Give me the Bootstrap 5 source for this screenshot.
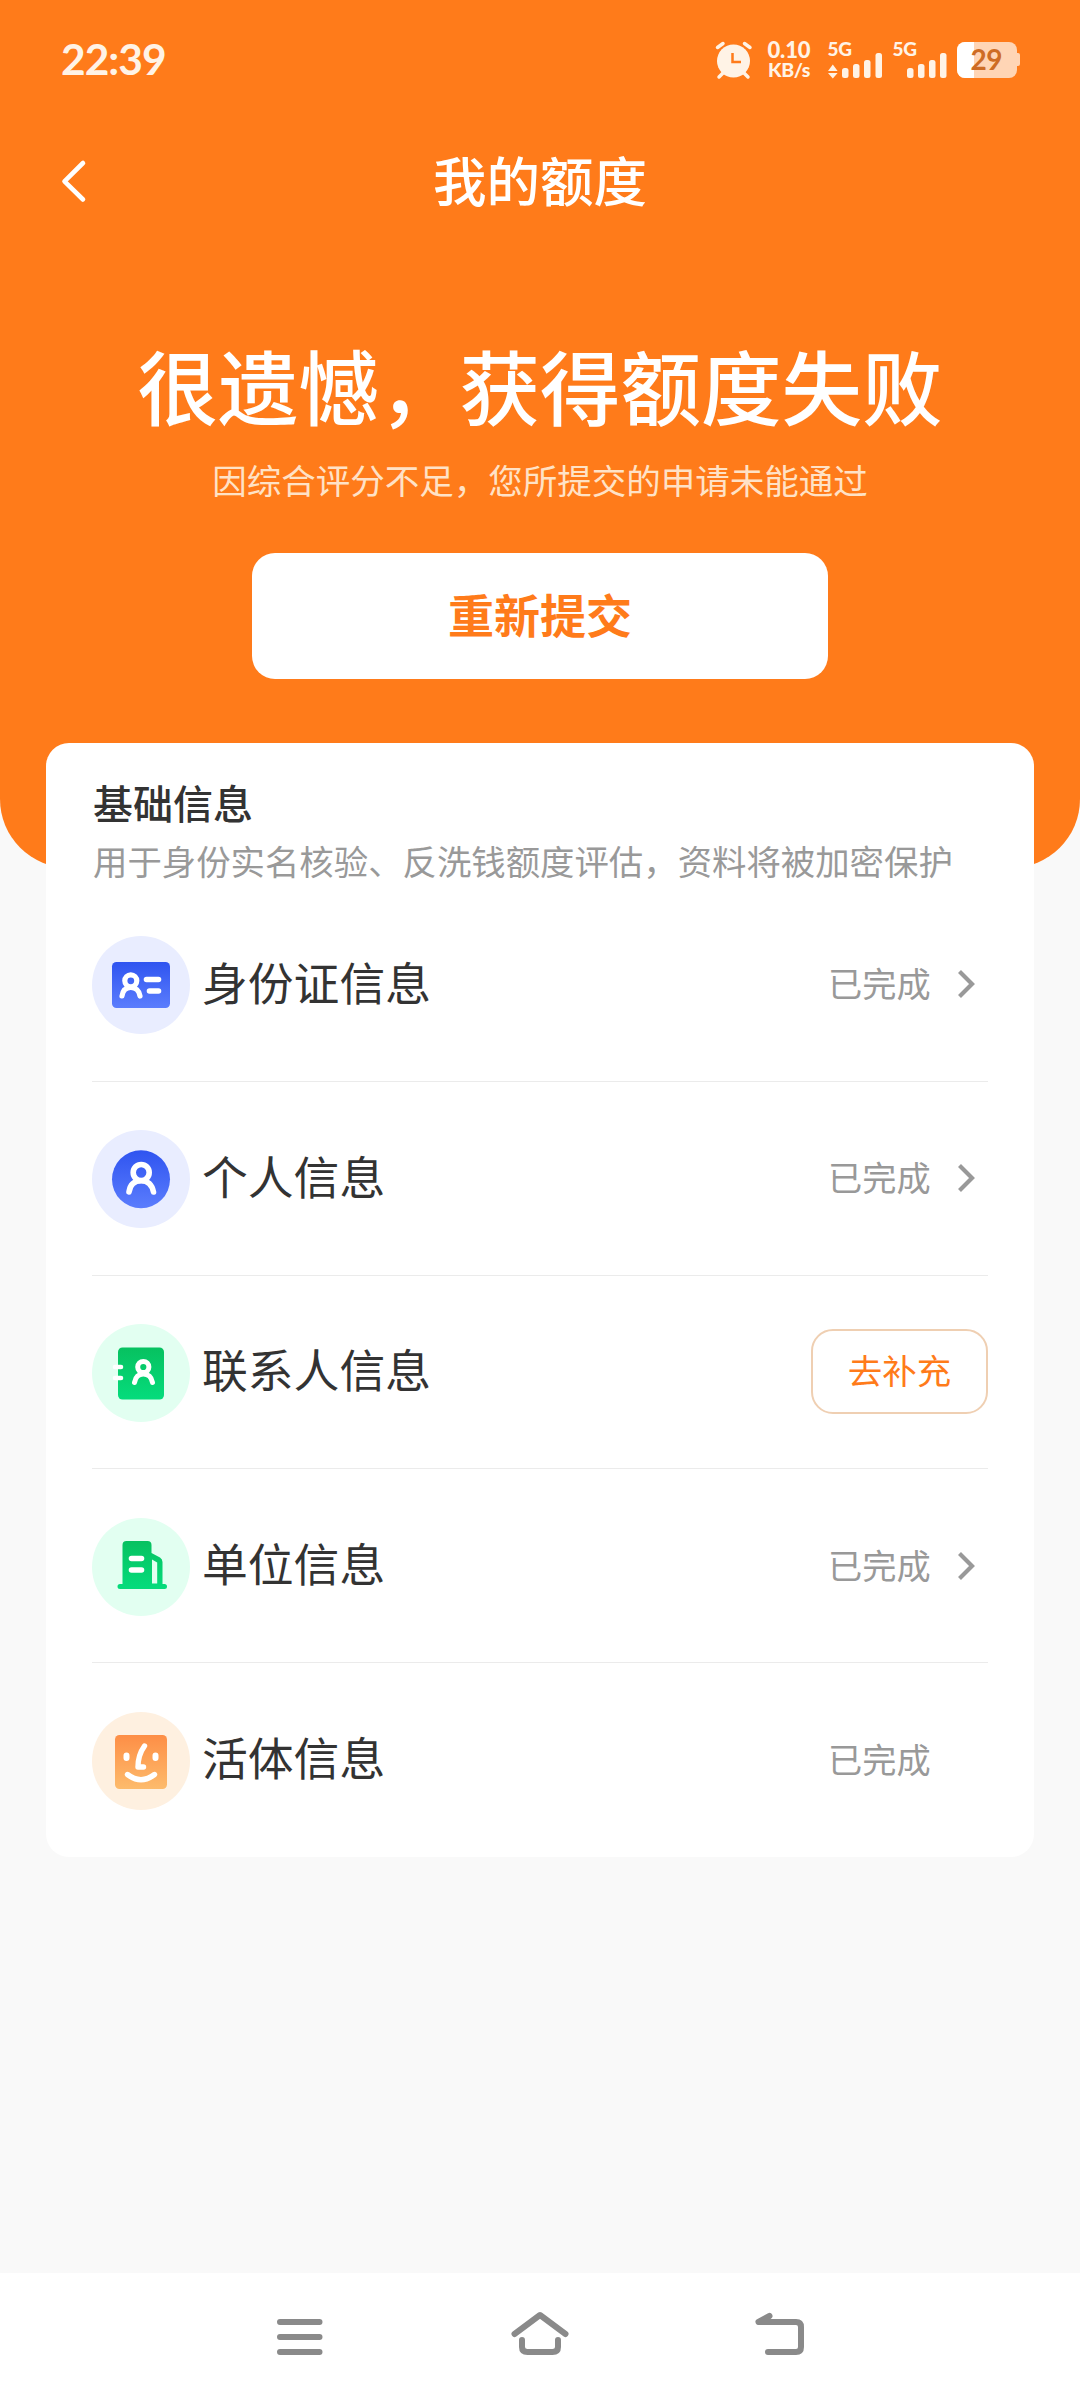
<!DOCTYPE html>
<html lang="zh-CN">
<head>
<meta charset="utf-8">
<meta name="viewport" content="width=device-width, initial-scale=1">
<title>我的额度</title>
<link href="https://cdn.jsdelivr.net/npm/bootstrap@5.3.0/dist/css/bootstrap.min.css" rel="stylesheet">
<style>
body{font-family:"Noto Sans CJK SC","Noto Sans",sans-serif;background:#f9f9f9;color:#333;min-height:2400px;line-height:1}
svg{display:block;flex:none}
.hero{background:#ff7b1a;height:868px;border-radius:0 0 69px 69px;color:#fff}
.statusbar{height:120px;padding:0 60px 0 61px}
.clock{font:700 42.500px/1 Lato,sans-serif;color:#fff3e6;letter-spacing:-1px;margin-top:-2px}
.titlebar{height:122px;padding:0 60px}
.titlebar h1{font-size:53.5px;font-weight:500;line-height:60px;position:relative;padding-bottom:4px}
.side{width:30px}
.headline{font-size:80.5px;font-weight:500;line-height:100px;margin-top:92px}
.reason{font-size:34.5px;line-height:44px;color:#ffe2c6;margin-top:23px;font-weight:400}
.resubmit{width:576px;height:126px;border-radius:23px;background:#fff;color:#ff7b1a;font-size:46px;font-weight:700;margin-top:52px;padding:0 0 6px}
.info{width:988px;height:1114px;margin-top:-125px;border:0;border-radius:23px;padding:0 46px}
.info h2{font-size:40px;font-weight:500;line-height:50px;margin:34px 0 0 1px}
.hint{font-size:34.4px;line-height:42px;color:#999;margin:12px 0 0 1px;white-space:nowrap}
.rows{margin-top:7px}
.rows .list-group-item{height:193.8px;padding:0;border-color:#ebebeb;background:transparent;color:#333}
.rows .list-group-item:last-child{height:193px}
.pic{margin-top:2px}
.name{font-size:45.8px;line-height:60px;margin:-7px 0 0 12px}
.done{font-size:34.2px;line-height:44px;color:#999;margin-top:-4px;width:160px}
.arrow{margin-left:-30px;margin-right:13px}
.fill{width:177px;height:85px;border:2px solid #efcfb2;border-radius:22px;color:#ff7b1a;font-size:34.5px;padding:0 0 5px}
.sysnav{height:127px;background:#fff;position:fixed;left:0;right:0;bottom:0}
</style>
</head>
<body>
<header class="hero d-flex flex-column">
  <div class="statusbar d-flex justify-content-between align-items-center">
    <span class="clock">22:39</span>
    <svg width="306" height="80" viewBox="714 20 306 80" fill="#fff3e6" font-family="Lato,sans-serif" font-weight="900">
      <circle cx="733.500" cy="61" r="16.500"/>
      <path d="M717.500 47.500L723 43.500M744.500 43.500L750 47.500M719 77L724 72M748 77L743 72" fill="none" stroke="#fff3e6" stroke-width="3.500" stroke-linecap="round"/>
      <path d="M732.500 53V62H741" fill="none" stroke="#ff7b1a" stroke-width="2.500"/>
      <text x="767.500" y="57.500" font-size="22" textLength="43">0.10</text>
      <text x="768" y="77" font-size="19.500" textLength="42.500">KB/s</text>
      <text x="827.500" y="56" font-size="19" textLength="24.500">5G</text>
      <path d="M828 71L832.800 64.500L837.600 71ZM828 73L837.600 73L832.800 78.500Z"/>
      <rect x="842" y="68" width="6.500" height="10" rx="2.500"/><rect x="853" y="64" width="6.500" height="14" rx="2.500"/><rect x="864" y="60" width="6.500" height="18" rx="2.500"/><rect x="875.500" y="53" width="6.500" height="25" rx="2.500"/>
      <text x="892.500" y="56" font-size="19" textLength="24.500">5G</text>
      <rect x="907" y="68" width="6.500" height="10" rx="2.500"/><rect x="918" y="64" width="6.500" height="14" rx="2.500"/><rect x="929" y="60" width="6.500" height="18" rx="2.500"/><rect x="940" y="53" width="6.500" height="25" rx="2.500"/>
      <rect x="957" y="42" width="60" height="36" rx="8" fill="#ffd5b5"/>
      <path d="M1017 53h1q2 0 2 2v9q0 2-2 2h-1z" fill="#ffd5b5"/>
      <path d="M974 42H965a8 8 0 0 0-8 8V70a8 8 0 0 0 8 8H974Z" fill="#fff"/>
      <text x="970.500" y="70" font-size="28" font-weight="700" textLength="32" fill="#ce6c24">29</text>
    </svg>
  </div>
  <div class="titlebar d-flex justify-content-between align-items-center">
    <svg class="side" width="30" height="44" viewBox="60 159 30 44" fill="none" stroke="#fff" stroke-width="4.600" stroke-linecap="round" stroke-linejoin="round"><path d="M83 163L64.500 181.300L83 199.500"/></svg>
    <h1 class="m-0">我的额度</h1>
    <span class="side"></span>
  </div>
  <div class="headline text-center">很遗憾&#65292;获得额度失败</div>
  <div class="reason text-center">因综合评分不足&#65292;您所提交的申请未能通过</div>
  <button class="resubmit btn align-self-center">重新提交</button>
</header>

<main class="info card mx-auto">
  <h2>基础信息</h2>
  <p class="hint mb-0">用于身份实名核验、反洗钱额度评估&#65292;资料将被加密保护</p>
  <ul class="rows list-group list-group-flush">
    <li class="list-group-item d-flex align-items-center">
      <svg class="pic" width="98" height="98" viewBox="0 0 98 98">
        <defs>
          <linearGradient id="blue" x2="0" y2="1"><stop stop-color="#2f54f0"/><stop offset="1" stop-color="#5b7dfd"/></linearGradient>
          <linearGradient id="green" x2="0" y2="1"><stop stop-color="#07c160"/><stop offset="1" stop-color="#05dc7c"/></linearGradient>
          <linearGradient id="amber" x2="0" y2="1"><stop stop-color="#fd8e46"/><stop offset="1" stop-color="#fdbb6c"/></linearGradient>
        </defs>
        <circle cx="49" cy="49" r="49" fill="#e9edff"/>
        <rect x="20" y="26" width="58" height="46" rx="4.500" fill="url(#blue)"/>
        <g fill="none" stroke="#fff" stroke-linecap="round"><circle cx="38.800" cy="44.800" r="6" stroke-width="5.200"/><path d="M30 60C30.800 54.500 33.500 51.500 38.800 51.500S47 54.500 48 60" stroke-width="5.200"/><path d="M54.500 43.500H66.500M57.500 55H66.500" stroke-width="5.600"/></g>
      </svg>
      <span class="name flex-grow-1">身份证信息</span><span class="done">已完成</span>
      <svg class="arrow" width="17" height="30" viewBox="0 0 17 30" fill="none" stroke="#999" stroke-width="4.200"><path d="M1.500 2.500L14 15L1.500 27.500"/></svg>
    </li>
    <li class="list-group-item d-flex align-items-center">
      <svg class="pic" width="98" height="98" viewBox="0 0 98 98"><circle cx="49" cy="49" r="49" fill="#e9edff"/><circle cx="49" cy="49.300" r="29" fill="url(#blue)"/><g fill="none" stroke="#fff" stroke-width="5.600" stroke-linecap="round"><circle cx="49.200" cy="42.500" r="8"/><path d="M37 62C38 55 42 50.800 49.200 50.800S60 55 61.500 62"/></g></svg>
      <span class="name flex-grow-1">个人信息</span><span class="done">已完成</span>
      <svg class="arrow" width="17" height="30" viewBox="0 0 17 30" fill="none" stroke="#999" stroke-width="4.200"><path d="M1.500 2.500L14 15L1.500 27.500"/></svg>
    </li>
    <li class="list-group-item d-flex align-items-center">
      <svg class="pic" width="98" height="98" viewBox="0 0 98 98"><circle cx="49" cy="49" r="49" fill="#e2fff1"/><rect x="26" y="23.500" width="46" height="52" rx="4.500" fill="url(#green)"/><g fill="none" stroke="#fff" stroke-linecap="round"><path d="M23 43H29M23 54H29" stroke-width="4.600"/><circle cx="51.300" cy="43" r="5.600" stroke-width="5"/><path d="M42.500 58.500C43.500 53 46.500 50 51.300 50S59.500 53 60.500 58.500" stroke-width="5"/></g></svg>
      <span class="name flex-grow-1">联系人信息</span>
      <button class="fill btn">去补充</button>
    </li>
    <li class="list-group-item d-flex align-items-center">
      <svg class="pic" width="98" height="98" viewBox="0 0 98 98"><circle cx="49" cy="49" r="49" fill="#e2fff1"/><path d="M30.500 66V27q0-4 4-4H55.500q4 0 4 4V35L68 39.500Q70.500 41 70.500 44V66H72.500a2.500 2.500 0 0 1 0 5H28a2.500 2.500 0 0 1 0-5Z" fill="url(#green)"/><path d="M60 41.500L65.200 44.500V65.500H60Z" fill="#e2fff1"/><path d="M39.500 40.500H49.500M39.500 52H49.500" stroke="#fff" stroke-width="5.600" stroke-linecap="round"/></svg>
      <span class="name flex-grow-1">单位信息</span><span class="done">已完成</span>
      <svg class="arrow" width="17" height="30" viewBox="0 0 17 30" fill="none" stroke="#999" stroke-width="4.200"><path d="M1.500 2.500L14 15L1.500 27.500"/></svg>
    </li>
    <li class="list-group-item d-flex align-items-center">
      <svg class="pic" width="98" height="98" viewBox="0 0 98 98"><circle cx="49" cy="49" r="49" fill="#fef0e0"/><rect x="23" y="23" width="52" height="54" rx="4.500" fill="url(#amber)"/><g fill="none" stroke="#fff" stroke-linecap="round" stroke-linejoin="round"><path d="M34.500 43.500V46M63.500 43.500V46" stroke-width="6"/><path d="M52.500 34Q46 43 46 55H51.500" stroke-width="5.400"/><path d="M35.500 62.500Q49 73 62.500 62.500" stroke-width="5.400"/></g></svg>
      <span class="name flex-grow-1">活体信息</span><span class="done">已完成</span>
    </li>
  </ul>
</main>

<nav class="sysnav d-flex">
  <svg width="1080" height="127" viewBox="0 2273 1080 127" fill="none" stroke="#8a8a8a" stroke-width="6" stroke-linecap="round" stroke-linejoin="round">
    <path d="M280 2322H319.500M280 2337H319.500M280 2352H319.500"/>
    <path d="M514.500 2334L540 2315L565.500 2334M522 2340V2347Q522 2352 527.500 2352H552.500Q558 2352 558 2347V2340"/>
    <path d="M769.500 2316L758.500 2322H796Q801 2322 801 2327V2347Q801 2352 796 2352H768"/>
  </svg>
</nav>
<script src="https://cdn.jsdelivr.net/npm/bootstrap@5.3.0/dist/js/bootstrap.bundle.min.js"></script>
</body>
</html>
